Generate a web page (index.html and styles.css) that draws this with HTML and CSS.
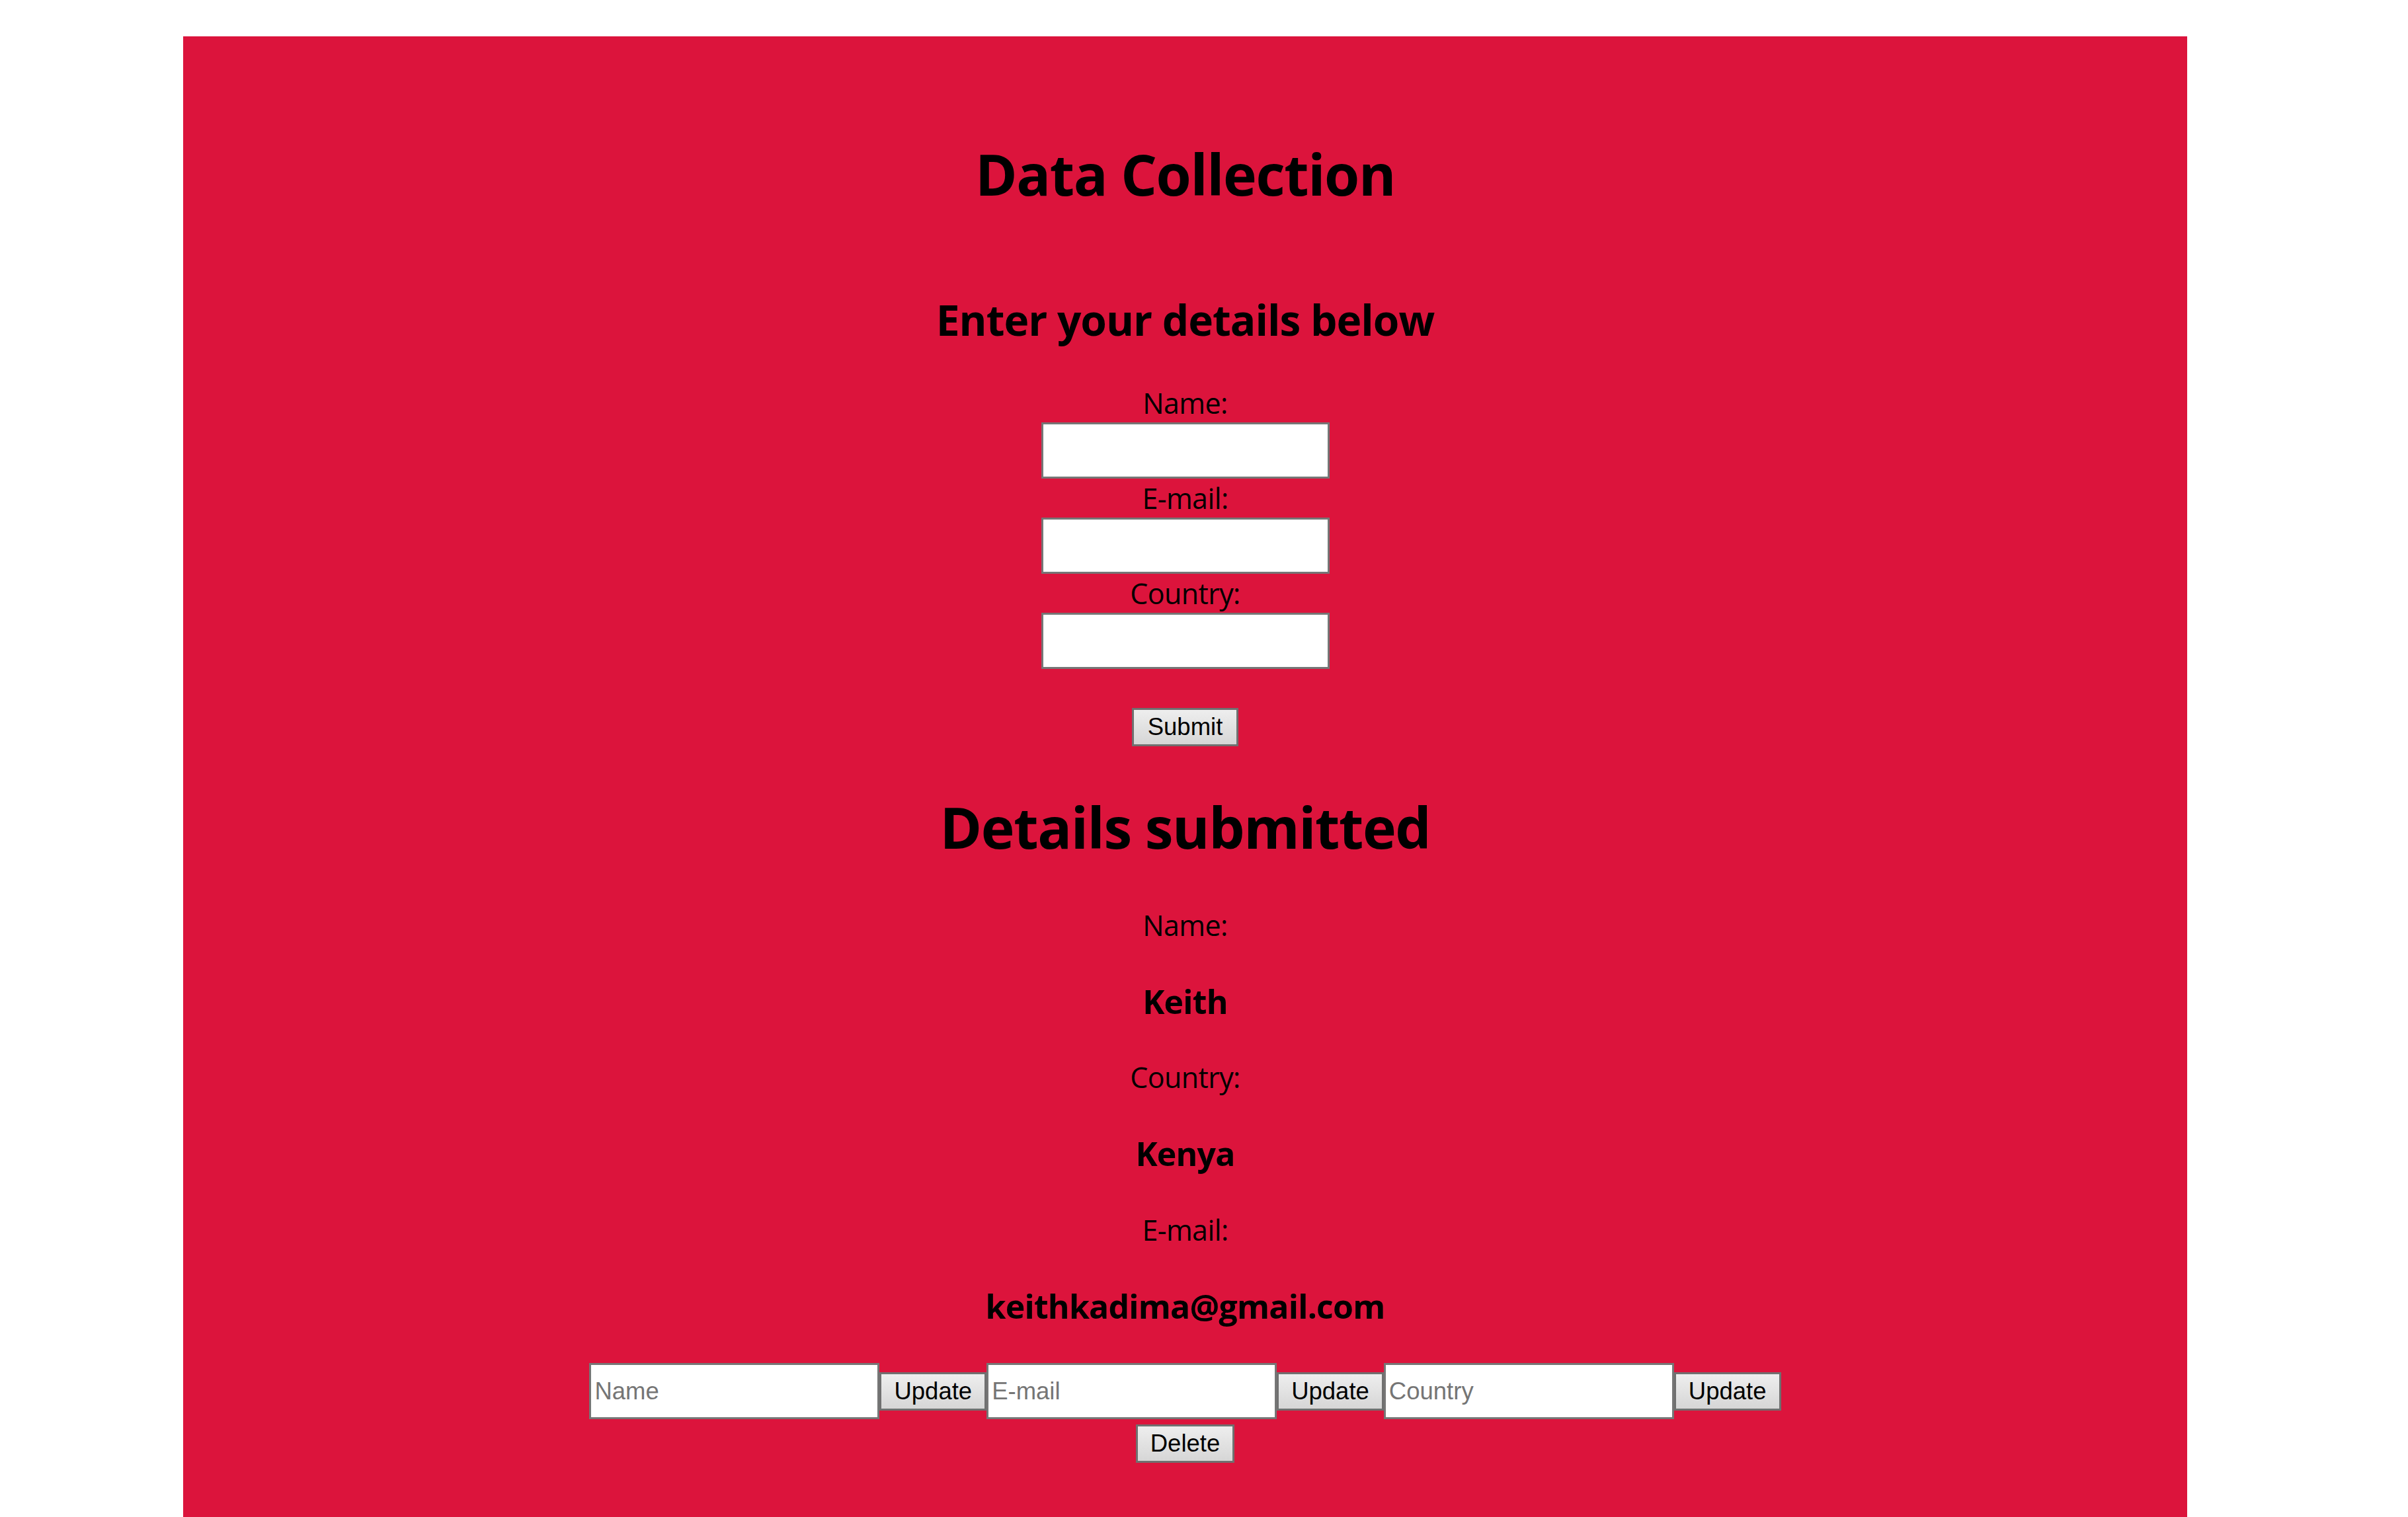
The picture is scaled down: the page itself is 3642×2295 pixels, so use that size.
FILE: index.html
```html
<!DOCTYPE html>
<html lang="en">
<head>
<meta charset="utf-8">
<title>Data Collection</title>
<link rel="stylesheet" href="styles.css">
</head>
<body>
<main class="page">
  <h1 class="title">Data Collection</h1>
  <h2 class="subtitle">Enter your details below</h2>
  <form class="entry-form">
    <label class="field-label" for="name">Name:</label>
    <input class="text-input" type="text" id="name">
    <label class="field-label" for="email">E-mail:</label>
    <input class="text-input" type="text" id="email">
    <label class="field-label" for="country">Country:</label>
    <input class="text-input" type="text" id="country">
    <button class="btn submit-btn" type="button">Submit</button>
  </form>
  <h1 class="title details-title">Details submitted</h1>
  <section class="details">
    <p class="detail-label">Name:</p>
    <h3 class="detail-value">Keith</h3>
    <p class="detail-label">Country:</p>
    <h3 class="detail-value">Kenya</h3>
    <p class="detail-label">E-mail:</p>
    <h3 class="detail-value">keithkadima@gmail.com</h3>
  </section>
  <div class="update-row">
    <input class="text-input row-input" type="text" placeholder="Name">
    <button class="btn" type="button">Update</button>
    <input class="text-input row-input" type="text" placeholder="E-mail">
    <button class="btn" type="button">Update</button>
    <input class="text-input row-input" type="text" placeholder="Country">
    <button class="btn" type="button">Update</button>
  </div>
  <div class="delete-row">
    <button class="btn" type="button">Delete</button>
  </div>
</main>
</body>
</html>
```

FILE: styles.css
```css
html, body {
  margin: 0;
  padding: 0;
  background: #ffffff;
  overflow: hidden;
}

.page {
  box-sizing: border-box;
  margin: 55px 0 0 277px;
  width: 3031px;
  height: 2240px;
  padding-top: 150px;
  background: #dc143c;
  color: #000000;
  font-family: "Open Sans", "Noto Sans", sans-serif;
  text-align: center;
  display: flex;
  flex-direction: column;
  align-items: center;
}

.title {
  margin: 0;
  font-size: 86px;
  font-weight: 700;
  line-height: 116.6px;
  letter-spacing: -1.4px;
}

.subtitle {
  margin: 118px 0 0;
  font-size: 64px;
  font-weight: 700;
  line-height: 87.5px;
  letter-spacing: -1px;
}

.entry-form {
  margin-top: 54px;
  display: flex;
  flex-direction: column;
  align-items: center;
}

.field-label {
  display: block;
  font-size: 43px;
  line-height: 58px;
  letter-spacing: -0.6px;
}

.text-input {
  box-sizing: border-box;
  width: 436px;
  height: 85px;
  margin: 0 0 1px;
  padding: 0 5px;
  border: 3px solid #767676;
  border-radius: 0;
  background: #ffffff;
  font-family: "Liberation Sans", Arial, sans-serif;
  font-size: 36.5px;
  color: #000000;
  outline: none;
}

.text-input::placeholder {
  color: #757575;
}

.btn {
  box-sizing: border-box;
  margin: 0;
  padding: 5px 19px;
  border: 3px solid #707070;
  border-radius: 0;
  background: linear-gradient(#eeeeee, #d6d6d6);
  font-family: "Liberation Sans", Arial, sans-serif;
  font-size: 36.5px;
  line-height: 41.9px;
  color: #000000;
}

.submit-btn {
  margin-top: 58px;
  padding: 5px 21px;
}

.details-title {
  margin-top: 64px;
}

.details {
  margin-top: 61px;
  display: flex;
  flex-direction: column;
  align-items: center;
  gap: 52px;
}

.detail-label {
  margin: 0;
  font-size: 43px;
  line-height: 58.3px;
  letter-spacing: -0.6px;
}

.detail-value {
  margin: 0;
  font-size: 50px;
  font-weight: 700;
  line-height: 68.2px;
  letter-spacing: -0.8px;
}

.update-row {
  margin-top: 52px;
  display: flex;
  align-items: center;
}

.row-input {
  width: 439px;
  margin: 0;
}

.delete-row {
  margin-top: 8px;
  display: flex;
  justify-content: center;
}
```
